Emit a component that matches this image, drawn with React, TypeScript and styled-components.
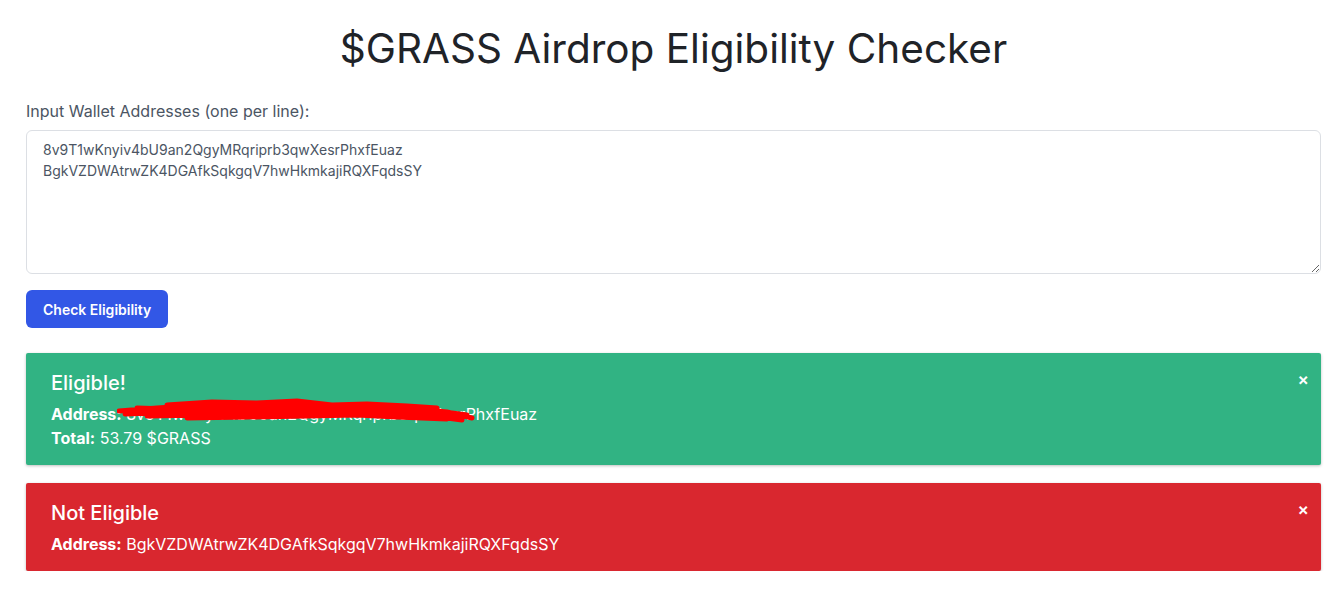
import React from "react";
import styled, { createGlobalStyle } from "styled-components";

const Global = createGlobalStyle`
  html, body { margin: 0; padding: 0; background: #fff; }
  body { font-family: Inter, "Noto Sans", sans-serif; color: #1f2937; }
`;

const Page = styled.div`
  padding: 21px 17px 0 26px;
  display: flex;
  flex-direction: column;
`;

const Title = styled.h1`
  margin: 0 0 22px;
  text-align: center;
  font-size: 40.5px;
  font-weight: 400;
  line-height: 56px;
  color: #1f2328;
`;

const Label = styled.label`
  font-size: 16px;
  line-height: 24px;
  color: #4b5563;
  margin-bottom: 7px;
`;

const TextArea = styled.textarea`
  box-sizing: border-box;
  height: 144px;
  width: 100%;
  padding: 8px 16px;
  border: 1px solid #dcdfe4;
  border-radius: 6px;
  font-family: Inter, "Noto Sans", sans-serif;
  font-size: 14px;
  line-height: 21px;
  color: #4b5563;
  resize: vertical;
  outline: none;
`;

const Button = styled.button`
  align-self: flex-start;
  margin-top: 16px;
  height: 38px;
  padding: 0 17px;
  border: none;
  border-radius: 6px;
  background: #3257e6;
  color: #fff;
  font-family: Inter, "Noto Sans", sans-serif;
  font-size: 14px;
  font-weight: 600;
  cursor: pointer;
`;

const Results = styled.div`
  margin-top: 25px;
  display: flex;
  flex-direction: column;
  gap: 18px;
`;

const Alert = styled.div<{ $tone: "ok" | "bad" }>`
  position: relative;
  background: ${(p) => (p.$tone === "ok" ? "#31b383" : "#d9272f")};
  color: #fff;
  padding: 16px 24px 15px 25px;
  border-radius: 2px;
  box-shadow: 0 1px 3px rgba(0, 0, 0, 0.25);
`;

const AlertTitle = styled.div`
  font-size: 20px;
  font-weight: 500;
  line-height: 28px;
  margin-bottom: 5px;
`;

const Line = styled.div`
  font-size: 16px;
  line-height: 24px;
  position: relative;
  b { font-weight: 700; }
`;

const Close = styled.span`
  position: absolute;
  top: 16px;
  right: 12px;
  font-size: 17px;
  font-weight: 600;
  line-height: 20px;
  color: #fff;
`;

const Redact = styled.svg`
  position: absolute;
  left: 66px;
  top: -6px;
  width: 360px;
  height: 34px;
  pointer-events: none;
`;

export default function App() {
  return (
    <>
      <Global />
      <Page>
        <Title>$GRASS Airdrop Eligibility Checker</Title>
        <Label>Input Wallet Addresses (one per line):</Label>
        <TextArea
          defaultValue={
            "8v9T1wKnyiv4bU9an2QgyMRqriprb3qwXesrPhxfEuaz\nBgkVZDWAtrwZK4DGAfkSqkgqV7hwHkmkajiRQXFqdsSY"
          }
        />
        <Button>Check Eligibility</Button>
        <Results>
          <Alert $tone="ok">
            <Close>×</Close>
            <AlertTitle>Eligible!</AlertTitle>
            <Line>
              <b>Address:</b> 8v9T1wKnyiv4bU9an2QgyMRqriprb3qwXesrPhxfEuaz
              <Redact viewBox="0 0 360 34">
                <path
                  d="M2 15 L40 12 L70 10 L110 9 L160 12 L200 10 L250 12 L300 13 L330 16 L355 22 M8 18 L60 16 L110 15 L140 11 L190 8 L230 13 L270 11 L320 15 L350 19 M30 20 L90 19 L130 18 L170 16 L220 17 L260 15 L300 18 L345 24 M50 9 L95 6 L140 7 L180 5 L215 9 L250 8 L290 10 L320 12 M20 12 L80 14 L150 13 L200 15 L240 14 L290 16 L340 18 M70 22 L130 21 L190 20 L240 19 L280 21 L330 23"
                  stroke="#ff0000"
                  strokeWidth="5"
                  fill="none"
                  strokeLinecap="round"
                  strokeLinejoin="round"
                />
              </Redact>
            </Line>
            <Line>
              <b>Total:</b> 53.79 $GRASS
            </Line>
          </Alert>
          <Alert $tone="bad">
            <Close>×</Close>
            <AlertTitle>Not Eligible</AlertTitle>
            <Line>
              <b>Address:</b> BgkVZDWAtrwZK4DGAfkSqkgqV7hwHkmkajiRQXFqdsSY
            </Line>
          </Alert>
        </Results>
      </Page>
    </>
  );
}
